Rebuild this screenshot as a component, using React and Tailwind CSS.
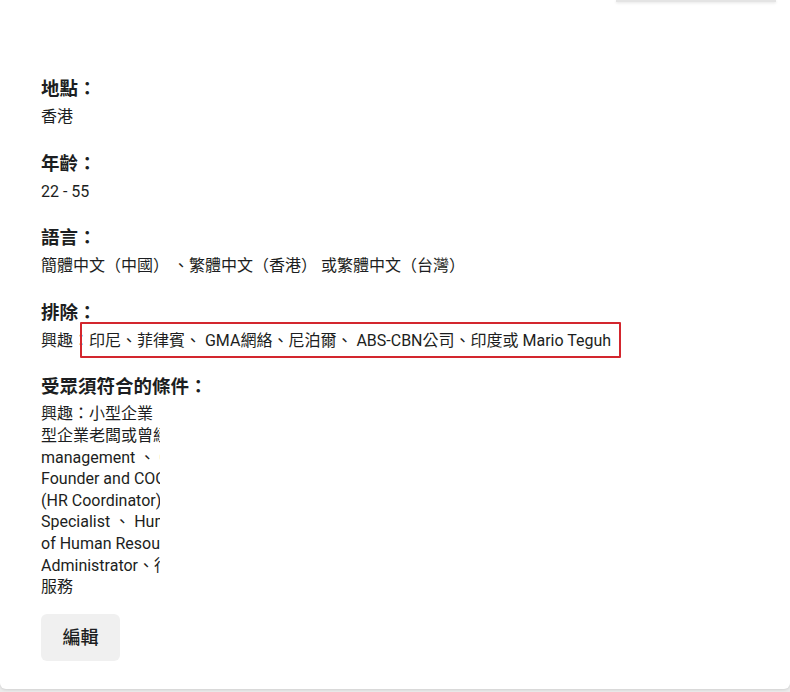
export default function App() {
  const font = { fontFamily: 'Roboto, "Noto Sans CJK TC", "Noto Sans", sans-serif' };
  const sections = [
    { h: "地點：", v: "香港" },
    { h: "年齡：", v: "22 - 55" },
    { h: "語言：", v: "簡體中文（中國） 、繁體中文（香港） 或繁體中文（台灣）" },
  ];
  const lines = [
    "興趣：小型企業（中小企業）、小",
    "型企業老闆或曾經營小型企業、Small business",
    "management 、 Co-Founder",
    "Founder and COO 、 人力資源協調員",
    "(HR Coordinator) 、 Human Resources",
    "Specialist 、 Human Resources Director",
    "of Human Resources 、 Human Resources",
    "Administrator、行政或專業",
    "服務",
  ];
  return (
    <div className="w-[790px] h-[692px] bg-[#ececec] overflow-hidden text-[#1c1e21]" style={font}>
      <div className="h-[689px] bg-white rounded-b-[6px] shadow-[0_1px_3px_rgba(0,0,0,0.12)] flex flex-col">
        <div className="flex justify-end pr-[14px]">
          <div className="w-[160px] h-[2px] bg-[#e4e4e4] shadow-[0_1px_3px_rgba(0,0,0,0.12)]" />
        </div>
        <div className="pl-[41px] pt-[74px] flex flex-col gap-[23px]">
          {sections.map((s) => (
            <div key={s.h} className="flex flex-col gap-[4px]">
              <div className="text-[18.5px] leading-[26px] font-bold">{s.h}</div>
              <div className="text-[16px] leading-[21.6px]">{s.v}</div>
            </div>
          ))}
          <div className="flex flex-col gap-[4px]">
            <div className="text-[18.5px] leading-[26px] font-bold">排除：</div>
            <div className="relative text-[16px] leading-[21.6px]">
              興趣：印尼、菲律賓、 GMA網絡、尼泊爾、 ABS-CBN公司、印度或 Mario Teguh
              <div className="absolute left-[39px] top-[-8px] w-[541px] h-[36px] border-2 border-[#d3262e] rounded-[1px]" />
            </div>
          </div>
          <div className="flex flex-col gap-[3px]">
            <div className="text-[18.5px] leading-[26px] font-bold">受眾須符合的條件：</div>
            <div className="w-[119px] overflow-hidden text-[16px] leading-[21.6px]">
              {lines.map((l, i) => (
                <div key={i} className="whitespace-nowrap">{l}</div>
              ))}
            </div>
          </div>
          <div className="-mt-[7px]">
            <button className="w-[79px] h-[47px] rounded-[6px] bg-[#f0f0f0] text-[18px] font-medium text-[#1c1e21] flex items-center justify-center">
              編輯
            </button>
          </div>
        </div>
      </div>
    </div>
  );
}
